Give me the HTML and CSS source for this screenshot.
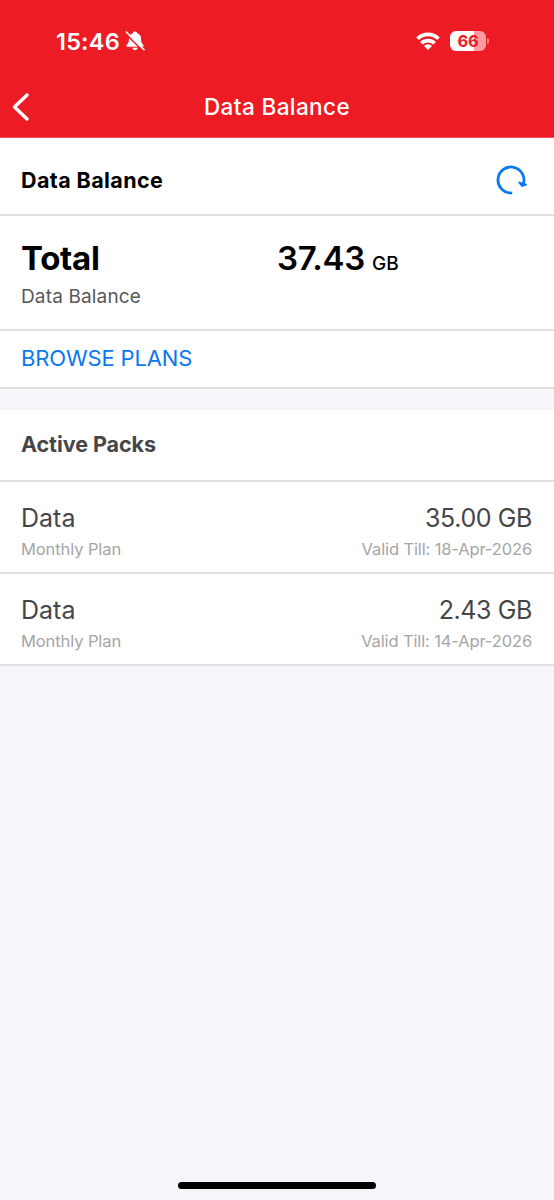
FILE: index.html
```html
<!DOCTYPE html>
<html lang="en">
<head>
<meta charset="utf-8">
<title>Data Balance</title>
<link rel="stylesheet" href="styles.css">
</head>
<body>
<header class="top">
  <div class="status">
    <div class="clock">
      <span class="time">15:46</span>
      <svg class="bell" width="20" height="20" viewBox="0 0 20 20">
        <path d="M10 .6c-1.200 0-2 .7-2.300 1.700C5 3.200 3.900 5.600 3.900 8.400c0 2.800-.8 4-2.100 5.300-.8.800-.5 2 .7 2h15c1.200 0 1.500-1.200.7-2-1.300-1.300-2.100-2.500-2.100-5.300 0-2.800-1.100-5.200-3.800-6.100C12 1.300 11.200.6 10 .6zM7.300 16.800h5.400c-.3 1.500-1.400 2.400-2.700 2.400s-2.400-.9-2.700-2.400z" fill="#fff"/>
        <path d="M.8 2.900L17 19" stroke="#ed1c24" stroke-width="1.500"/>
        <path d="M1.300 1L19 18.600" stroke="#fff" stroke-width="1.600" stroke-linecap="round"/>
      </svg>
    </div>
    <div class="signals">
      <svg width="24" height="18" viewBox="0 0 24 18" fill="none" stroke="#fff" stroke-width="3.700">
        <path d="M1.500 6.800a14.800 14.800 0 0 1 21 0"/>
        <path d="M5.400 11.300a9.400 9.400 0 0 1 13.200 0"/>
        <path d="M12 18l-4-4.100a5.600 5.600 0 0 1 8 0z" fill="#fff" stroke="none"/>
      </svg>
      <div class="battery"><span class="level">66</span><i class="cap"></i></div>
    </div>
  </div>
  <nav class="nav">
    <svg class="back" width="18" height="28" viewBox="0 0 18 28"><path d="M15 2L2.500 14 15 26" fill="none" stroke="#fff" stroke-width="3.400" stroke-linecap="round" stroke-linejoin="round"/></svg>
    <h1 class="title">Data Balance</h1>
  </nav>
</header>
<main>
  <section class="row heading">
    <h2 class="name">Data Balance</h2>
    <svg class="refresh" width="32" height="30" viewBox="0 0 32 30" fill="none" stroke="#0a78f0" stroke-width="2.800" stroke-linecap="round" stroke-linejoin="round">
      <path d="M15 28A13 13 0 1 1 27.300 19.200"/>
      <path d="M23.400 17.600L26.100 20.900 30 19.600z" fill="#0a78f0" stroke-width="2"/>
    </svg>
  </section>
  <section class="row summary">
    <div class="half">
      <div class="total">Total</div>
      <div class="caption">Data Balance</div>
    </div>
    <div class="half amount"><span class="number">37.43</span><span class="unit">GB</span></div>
  </section>
  <section class="row link"><a class="browse">BROWSE PLANS</a></section>
  <div class="gap"></div>
  <section class="row packs"><h2 class="active">Active Packs</h2></section>
  <section class="row pack">
    <div class="line"><span class="kind">Data</span><span class="size">35.00 GB</span></div>
    <div class="line small"><span class="plan">Monthly Plan</span><span class="valid">Valid Till: 18-Apr-2026</span></div>
  </section>
  <section class="row pack">
    <div class="line"><span class="kind">Data</span><span class="size">2.43 GB</span></div>
    <div class="line small"><span class="plan">Monthly Plan</span><span class="valid">Valid Till: 14-Apr-2026</span></div>
  </section>
</main>
<footer class="foot"><div class="home"></div></footer>
</body>
</html>
```
FILE: styles.css
```css
* { box-sizing: border-box; }
body {
  margin: 0;
  height: 1200px;
  display: flex;
  flex-direction: column;
  background: #f5f5fa;
  color: #000;
  font-family: Inter, "Liberation Sans", sans-serif;
  white-space: nowrap;
}
h1, h2 { margin: 0; }
.top { height: 138px; background: #ed1c24; border-bottom: 1px solid #f2545a; color: #fff; }
.status { height: 76px; padding: 6px 68px 0 56px; display: flex; justify-content: space-between; align-items: center; }
.clock { display: flex; align-items: center; gap: 5px; }
.time { font-size: 23.500px; font-weight: 600; letter-spacing: 0.2px; }
.signals { display: flex; align-items: center; gap: 10px; }
.battery { position: relative; width: 36px; height: 20px; border-radius: 6px; background: linear-gradient(90deg, #fff 66%, #f99ba0 66%); display: flex; align-items: center; justify-content: center; }
.level { font-size: 16.500px; font-weight: 700; line-height: 20px; letter-spacing: -0.3px; color: #ed1c24; }
.cap { position: absolute; right: -3px; top: 7px; width: 2px; height: 6px; border-radius: 0 2px 2px 0; background: #f6858b; }
.nav { height: 61px; display: grid; grid-template-columns: 40px 1fr 40px; align-items: center; }
.back { margin-left: 12px; }
.title { text-align: center; font-size: 22.500px; font-weight: 500; letter-spacing: 0.4px; }
.row { background: #fff; border-bottom: 2px solid #e0e0e1; padding: 0 22px 0 21px; }
.heading { height: 78px; padding: 7px 26px 0 21px; display: flex; justify-content: space-between; align-items: center; }
.name { font-size: 21.500px; font-weight: 700; letter-spacing: 0.4px; }
.summary { height: 115px; display: grid; grid-template-columns: 256px 1fr; padding-top: 21px; }
.total { font-size: 33px; line-height: 42px; font-weight: 700; letter-spacing: -0.3px; }
.caption { font-size: 19px; line-height: 36px; letter-spacing: 0.15px; color: #58585a; }
.amount { display: flex; align-items: baseline; gap: 7px; line-height: 42px; }
.number { font-size: 33px; font-weight: 600; letter-spacing: -0.3px; }
.unit { font-size: 19px; font-weight: 500; letter-spacing: 0.2px; }
.link { height: 58px; padding-bottom: 2px; display: flex; align-items: center; }
.browse { font-size: 22px; letter-spacing: -0.15px; color: #0a78ee; }
.gap { height: 21px; }
.packs { height: 72px; padding-bottom: 2px; display: flex; align-items: center; }
.active { font-size: 21.500px; font-weight: 700; letter-spacing: -0.05px; color: #464648; }
.pack { height: 92px; padding-top: 19px; }
.line { display: flex; justify-content: space-between; line-height: 34px; color: #464648; }
.small { line-height: 28px; color: #a5a5a7; }
.kind { font-size: 25px; }
.size { font-size: 25px; letter-spacing: -0.4px; }
.plan { font-size: 16.500px; letter-spacing: -0.1px; }
.valid { font-size: 16.500px; letter-spacing: -0.13px; }
.foot { margin-top: auto; height: 18px; display: flex; justify-content: center; }
.home { width: 198px; height: 7px; border-radius: 4px; background: #000; }
```
